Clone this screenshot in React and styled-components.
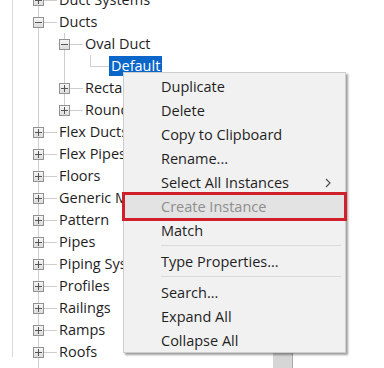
import React from "react";
import styled, { createGlobalStyle } from "styled-components";

const GlobalStyle = createGlobalStyle`
  body {
    margin: 0;
    background: #ffffff;
    font-family: "Open Sans", "Noto Sans", sans-serif;
  }
`;

const treeItems = [
  { level: 1, label: "Duct Systems", box: "plus" },
  { level: 1, label: "Ducts", box: "minus" },
  { level: 2, label: "Oval Duct", box: "minus", guides: [true] },
  { level: 3, label: "Default", guides: [true, true], last: true, selected: true },
  { level: 2, label: "Rectangular Duct", box: "plus", guides: [true] },
  { level: 2, label: "Round Duct", box: "plus", guides: [true], last: true },
  { level: 1, label: "Flex Ducts", box: "plus" },
  { level: 1, label: "Flex Pipes", box: "plus" },
  { level: 1, label: "Floors", box: "plus" },
  { level: 1, label: "Generic Models", box: "plus" },
  { level: 1, label: "Pattern", box: "plus" },
  { level: 1, label: "Pipes", box: "plus" },
  { level: 1, label: "Piping Systems", box: "plus" },
  { level: 1, label: "Profiles", box: "plus" },
  { level: 1, label: "Railings", box: "plus" },
  { level: 1, label: "Ramps", box: "plus" },
  { level: 1, label: "Roofs", box: "plus" },
  { level: 1, label: "Shaft Openings", box: "plus" },
];

const menuItems = [
  { label: "Duplicate" },
  { label: "Delete" },
  { label: "Copy to Clipboard" },
  { label: "Rename..." },
  { label: "Select All Instances", submenu: true },
  { label: "Create Instance", disabled: true, marked: true },
  { label: "Match" },
  { separator: true },
  { label: "Type Properties..." },
  { separator: true },
  { label: "Search..." },
  { label: "Expand All" },
  { label: "Collapse All" },
];

export default function App() {
  return (
    <>
      <GlobalStyle />
      <Frame>
        <Panel>
          <Tree>
            {treeItems.map((item) => (
              <Row key={item.label}>
                {(item.guides || []).map((on, i) => (
                  <Guide key={i} on={on} />
                ))}
                <Elbow last={item.last}>
                  {item.box && (
                    <ExpandBox>
                      <Sign />
                      {item.box === "plus" && <Sign vertical />}
                    </ExpandBox>
                  )}
                </Elbow>
                <Label selected={item.selected}>{item.label}</Label>
              </Row>
            ))}
          </Tree>
        </Panel>

        <ShadowNub />

        <Menu>
          {menuItems.map((item, i) =>
            item.separator ? (
              <Separator key={i} />
            ) : (
              <MenuItem key={item.label} disabled={item.disabled} hovered={item.marked}>
                {item.label}
                {item.submenu && (
                  <Chevron width="6" height="10" viewBox="0 0 6 10">
                    <path d="M1 1 L5 5 L1 9" fill="none" stroke="#4a4a4a" strokeWidth="1.1" />
                  </Chevron>
                )}
                {item.marked && <Highlight />}
              </MenuItem>
            )
          )}
        </Menu>
      </Frame>
    </>
  );
}

const Frame = styled.div`
  position: relative;
  width: 384px;
  height: 368px;
  overflow: hidden;
  background: #ffffff;
`;

const Panel = styled.div`
  margin-left: 12px;
  height: 100%;
  border-left: 1px solid #dadada;
`;

const Tree = styled.div`
  margin-top: -11px;
  padding-left: 12px;
  display: flex;
  flex-direction: column;
`;

const Row = styled.div`
  display: flex;
  align-items: center;
  height: 22px;
  flex: none;
`;

const Guide = styled.div`
  width: 26px;
  height: 22px;
  flex: none;
  position: relative;

  &::before {
    content: "";
    display: ${(p) => (p.on ? "block" : "none")};
    position: absolute;
    left: 13px;
    top: 0;
    bottom: 0;
    width: 1px;
    background: #cdcdcd;
  }
`;

const Elbow = styled.div`
  width: 26px;
  height: 22px;
  flex: none;
  position: relative;

  &::before {
    content: "";
    position: absolute;
    left: 13px;
    top: 0;
    bottom: ${(p) => (p.last ? "11px" : "0")};
    width: 1px;
    background: #cdcdcd;
  }

  &::after {
    content: "";
    position: absolute;
    left: 13px;
    top: 11px;
    width: 19px;
    height: 1px;
    background: #cdcdcd;
  }
`;

const ExpandBox = styled.div`
  position: absolute;
  left: 8px;
  top: 6px;
  width: 11px;
  height: 11px;
  box-sizing: border-box;
  border: 1px solid #929292;
  background: linear-gradient(#f6f6f6, #dcdcdc);
  z-index: 1;
`;

const Sign = styled.span`
  position: absolute;
  background: #555555;
  left: ${(p) => (p.vertical ? "4px" : "1px")};
  top: ${(p) => (p.vertical ? "1px" : "4px")};
  width: ${(p) => (p.vertical ? "1px" : "7px")};
  height: ${(p) => (p.vertical ? "7px" : "1px")};
`;

const Label = styled.span`
  margin-left: 6px;
  padding: 0 2px;
  height: 20px;
  line-height: 20px;
  font-size: 14.5px;
  white-space: nowrap;
  color: ${(p) => (p.selected ? "#ffffff" : "#1e1e1e")};
  background: ${(p) => (p.selected ? "#0b66c9" : "transparent")};
`;

const ShadowNub = styled.div`
  position: absolute;
  left: 273px;
  top: 350px;
  width: 19px;
  height: 18px;
  background: #d6d6d6;
  border-right: 1px solid #a9a9a9;
`;

const Menu = styled.div`
  position: absolute;
  left: 123px;
  top: 72px;
  width: 223px;
  box-sizing: border-box;
  padding: 1px 0 0;
  background: #f1f1f1;
  border: 1px solid #cdcdcd;
  box-shadow: 2px 2px 2px rgba(0, 0, 0, 0.38);
  display: flex;
  flex-direction: column;
`;

const MenuItem = styled.div`
  position: relative;
  display: flex;
  align-items: center;
  height: 24px;
  padding-left: 37px;
  font-size: 14.5px;
  white-space: nowrap;
  color: ${(p) => (p.disabled ? "#8e8e8e" : "#1f1f1f")};
  background: ${(p) => (p.hovered ? "#e3e3e3" : "transparent")};
`;

const Chevron = styled.svg`
  position: absolute;
  right: 14px;
  top: 8px;
`;

const Highlight = styled.div`
  position: absolute;
  left: -2px;
  right: -2px;
  top: -2px;
  bottom: -3px;
  border: 3px solid #d0202c;
  pointer-events: none;
`;

const Separator = styled.div`
  height: 7px;
  flex: none;
  position: relative;

  &::after {
    content: "";
    position: absolute;
    left: 37px;
    right: 4px;
    top: 3px;
    height: 1px;
    background: #d9d9d9;
  }
`;
